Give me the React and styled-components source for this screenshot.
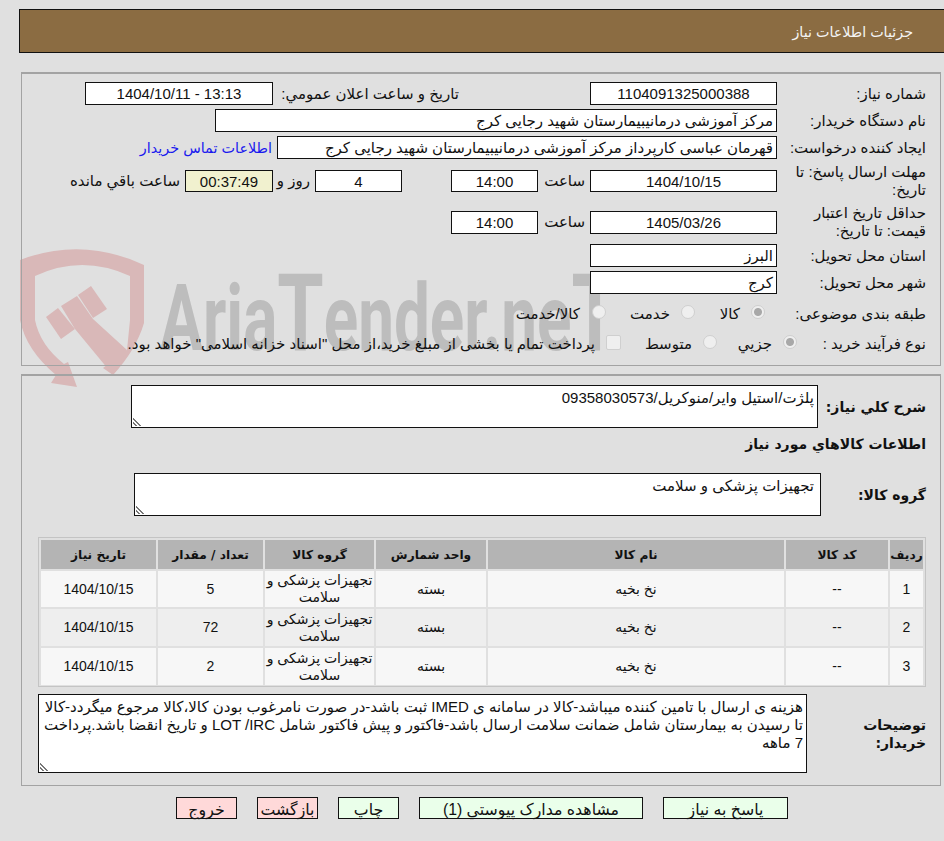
import { Fragment } from "react";
import styled, { createGlobalStyle } from "styled-components";

const GlobalStyle = createGlobalStyle`
  html, body {
    margin: 0;
    padding: 0;
    background: #e0e0e0;
  }
  body {
    font-family: "Liberation Sans", "DejaVu Sans", sans-serif;
    font-size: 15px;
    color: #111;
    overflow: hidden;
  }
`;

const Page = styled.div`
  position: relative;
  width: 944px;
  height: 841px;
  overflow: hidden;
  direction: rtl;
  padding-top: 9px;
  box-sizing: border-box;
`;

const TitleBar = styled.div`
  margin: 0 0 0 19px;
  height: 44px;
  box-sizing: border-box;
  background: #8b6c42;
  border: 1px solid #111;
  border-right: none;
  color: #f4f4f4;
  font-size: 14.3px;
  line-height: 44px;
  padding-right: 31px;
`;

const Panel = styled.section`
  margin: ${(p) => p.$top}px 3px 0 21px;
  height: ${(p) => p.$height}px;
  box-sizing: border-box;
  border: 1px solid #a3a3a3;
  border-top-width: 2px;
  padding-right: 14px;
  display: flex;
  flex-direction: column;
`;

const Row = styled.div`
  display: flex;
  align-items: center;
  height: ${(p) => p.$height}px;
  margin-top: ${(p) => p.$top || 0}px;
`;

const Label = styled.div`
  width: ${(p) => p.$width || 149}px;
  flex: none;
  line-height: 18px;
  white-space: ${(p) => (p.$nowrap ? "nowrap" : "normal")};
`;

const BoldLabel = styled(Label)`
  font-family: "DejaVu Sans", sans-serif;
  font-size: 14px;
  font-weight: 700;
`;

const Field = styled.div`
  width: ${(p) => p.$width}px;
  height: ${(p) => p.$height || 23}px;
  flex: none;
  box-sizing: border-box;
  border: 1px solid #111;
  background: ${(p) => p.$bg || "#fff"};
  text-align: ${(p) => p.$align || "center"};
  padding: 0 3px;
  line-height: 21px;
  white-space: nowrap;
  overflow: hidden;
  direction: ${(p) => p.$dir || "rtl"};
  margin-right: ${(p) => p.$gap || 0}px;
`;

const Inline = styled.span`
  flex: none;
  white-space: nowrap;
  width: ${(p) => (p.$width ? `${p.$width}px` : "auto")};
  margin-right: ${(p) => p.$gap || 0}px;
`;

const BuyerLink = styled.a`
  color: #1a1aee;
  font-size: 14.4px;
  text-decoration: none;
  flex: none;
  margin-right: 5px;
`;

const Radio = styled.span`
  width: 14px;
  height: 14px;
  flex: none;
  position: relative;
  top: -2px;
  box-sizing: border-box;
  border-radius: 50%;
  border: 1px solid #cfcfcf;
  background: ${(p) => (p.$on ? "radial-gradient(circle, #a8a8a8 0 3.5px, #efefef 4.5px)" : "#efefef")};
  margin-right: ${(p) => p.$gap || 0}px;
`;

const Check = styled.span`
  width: 15px;
  height: 15px;
  flex: none;
  position: relative;
  top: -2px;
  box-sizing: border-box;
  border: 1px solid #cfcfcf;
  border-radius: 2px;
  background: #efefef;
`;

const Note = styled.div`
  position: relative;
  flex: none;
  box-sizing: border-box;
  width: ${(p) => p.$width}px;
  height: ${(p) => p.$height}px;
  border: 1px solid #111;
  background: #fff;
  padding: 3px ${(p) => p.$pad || 3}px 0;
  line-height: 18px;
  &::after {
    content: "";
    position: absolute;
    left: 1px;
    bottom: 1px;
    width: 9px;
    height: 9px;
    background: repeating-linear-gradient(45deg, transparent 0 1.5px, #777 1.5px 3px);
    clip-path: polygon(0 0, 100% 100%, 0 100%);
  }
`;

const BoldHeading = styled.div`
  font-family: "DejaVu Sans", sans-serif;
  font-size: 14px;
  font-weight: 700;
  height: 18px;
  line-height: 18px;
  margin-top: 7px;
`;

const GoodsTable = styled.div`
  width: 888px;
  height: 150px;
  margin-top: 21px;
  box-sizing: border-box;
  border: 1px solid #c4c4c4;
  padding: 2px;
  display: grid;
  grid-template-columns: 33px 102px 296px 110px 109px 105px 115px;
  grid-template-rows: 29px 36px 37px 37px;
  gap: 2px;
`;

const HeadCell = styled.div`
  background: #b4b4b4;
  font-family: "DejaVu Sans", sans-serif;
  font-weight: 700;
  font-size: 12.2px;
  white-space: nowrap;
  display: flex;
  align-items: center;
  justify-content: center;
`;

const Cell = styled.div`
  background: ${(p) => (p.$even ? "#eeeeee" : "#f7f7f7")};
  display: flex;
  align-items: center;
  justify-content: center;
  text-align: center;
  line-height: 17px;
  font-size: 14px;
`;

const Buttons = styled.div`
  display: flex;
  margin: 11px 156px 0 0;
  gap: 20px;
`;

const Button = styled.button`
  width: ${(p) => p.$width}px;
  height: 22px;
  box-sizing: border-box;
  padding: 2px 0 0;
  border: 1px solid #111;
  background: ${(p) => (p.$danger ? "#ffd9d9" : "#eaffea")};
  font: inherit;
  font-size: 15.8px;
  color: #111;
  direction: rtl;
`;

const Watermark = styled.div`
  position: absolute;
  left: 15px;
  top: 240px;
  width: 800px;
  height: 160px;
  z-index: 1;
  pointer-events: none;
  direction: ltr;
`;

const Content = styled.div`
  position: relative;
  z-index: 2;
`;

const rows = [
  { id: 1, qty: 5 },
  { id: 2, qty: 72 },
  { id: 3, qty: 2 },
];

const heads = ["ردیف", "کد کالا", "نام کالا", "واحد شمارش", "گروه کالا", "تعداد / مقدار", "تاريخ نياز"];

function WatermarkLogo() {
  return (
    <Watermark>
      <svg width="800" height="160" viewBox="15 240 800 160">
        <g fill="#d9b8b8">
          {/* shield, open at the bottom, ending in an arrow on the left */}
          <path d="M20 260 Q82 236 144 265 V323 Q136 350 113 375 L103 368 L127 350 L130 320 V276 Q82 254 35 276 V320 Q40 345 64 364 L68 362 L77 387 L51 383 L56 375 Q26 350 20 320 Z" />
          <path d="M46 317 L58 308 L75 329 L61 339 Z" />
          <path d="M61 306 L77 296 L93 319 L127 350 L113 375 L75 329 Z" />
          <path d="M78 295 L91 286 L107 309 L93 318 Z" />
        </g>
        <text
          x="160"
          y="350"
          fontFamily="Roboto, sans-serif"
          fontWeight="700"
          fontSize="92"
          fill="#bdbdbd"
          textLength="458"
          lengthAdjust="spacingAndGlyphs"
        >
          Aria<tspan fontSize="108">T</tspan>ender.ne<tspan fontSize="108">T</tspan>
        </text>
      </svg>
    </Watermark>
  );
}

export default function App() {
  return (
    <Page>
      <GlobalStyle />
      <WatermarkLogo />
      <Content>
        <TitleBar>جزئيات اطلاعات نياز</TitleBar>

        <Panel $top={19} $height={294}>
          <Row $height={23} $top={8}>
            <Label>شماره نياز:</Label>
            <Field $width={187}>1104091325000388</Field>
            <Inline $gap={131} $width={181}>تاريخ و ساعت اعلان عمومي:</Inline>
            <Field $width={188} $gap={5} $dir="ltr">1404/10/11 - 13:13</Field>
          </Row>
          <Row $height={23} $top={4}>
            <Label>نام دستگاه خريدار:</Label>
            <Field $width={562} $align="right">مرکز آموزشی درمانیبیمارستان شهید رجایی کرج</Field>
          </Row>
          <Row $height={23} $top={4}>
            <Label $nowrap>ايجاد کننده درخواست:</Label>
            <Field $width={500} $align="right">قهرمان عباسی کارپرداز مرکز آموزشی درمانیبیمارستان شهید رجایی کرج</Field>
            <BuyerLink href="#">اطلاعات تماس خريدار</BuyerLink>
          </Row>
          <Row $height={36} $top={4}>
            <Label>مهلت ارسال پاسخ: تا تاريخ:</Label>
            <Field $width={187} $height={22}>1404/10/15</Field>
            <Inline $gap={5} $width={47}>ساعت</Inline>
            <Field $width={87} $height={22}>14:00</Field>
            <Field $width={87} $height={22} $gap={49}>4</Field>
            <Inline $gap={5} $width={37}>روز و</Inline>
            <Field $width={88} $height={22} $bg="#f1f1cf">00:37:49</Field>
            <Inline $gap={5}>ساعت باقي مانده</Inline>
          </Row>
          <Row $height={36} $top={5}>
            <Label>حداقل تاريخ اعتبار قيمت: تا تاريخ:</Label>
            <Field $width={187}>1405/03/26</Field>
            <Inline $gap={5} $width={47}>ساعت</Inline>
            <Field $width={87}>14:00</Field>
          </Row>
          <Row $height={23} $top={4}>
            <Label>استان محل تحويل:</Label>
            <Field $width={187} $align="right">البرز</Field>
          </Row>
          <Row $height={23} $top={4}>
            <Label>شهر محل تحويل:</Label>
            <Field $width={187} $align="right">کرج</Field>
          </Row>
          <Row $height={18} $top={11}>
            <Label>طبقه بندی موضوعی:</Label>
            <Radio $on $gap={12} />
            <Inline $gap={11} $width={45}>کالا</Inline>
            <Radio />
            <Inline $gap={11} $width={64}>خدمت</Inline>
            <Radio />
            <Inline $gap={12}>کالا/خدمت</Inline>
          </Row>
          <Row $height={18} $top={12}>
            <Label $width={129} $nowrap>نوع فرآيند خريد :</Label>
            <Radio $on />
            <Inline $gap={11} $width={55}>جزيي</Inline>
            <Radio />
            <Inline $gap={11} $width={71}>متوسط</Inline>
            <Check />
            <Inline $gap={11}>پرداخت تمام یا بخشی از مبلغ خرید،از محل "اسناد خزانه اسلامی" خواهد بود.</Inline>
          </Row>
        </Panel>

        <Panel $top={8} $height={412}>
          <Row $height={43} $top={9}>
            <BoldLabel $width={108}>شرح كلي نياز:</BoldLabel>
            <Note $width={687} $height={43}>پلژت/استیل وایر/منوکریل/09358030573</Note>
          </Row>
          <BoldHeading>اطلاعات كالاهاي مورد نياز</BoldHeading>
          <Row $height={43} $top={20}>
            <BoldLabel $width={105}>گروه كالا:</BoldLabel>
            <Note $width={687} $height={43} $pad={6}>تجهیزات پزشکی و سلامت</Note>
          </Row>
          <GoodsTable>
            {heads.map((h) => (
              <HeadCell key={h}>{h}</HeadCell>
            ))}
            {rows.map((r) => (
              <Fragment key={r.id}>
                <Cell $even={r.id === 2}>{r.id}</Cell>
                <Cell $even={r.id === 2}>--</Cell>
                <Cell $even={r.id === 2}>نخ بخیه</Cell>
                <Cell $even={r.id === 2}>بسته</Cell>
                <Cell $even={r.id === 2}>تجهیزات پزشکی و سلامت</Cell>
                <Cell $even={r.id === 2}>{r.qty}</Cell>
                <Cell $even={r.id === 2}>1404/10/15</Cell>
              </Fragment>
            ))}
          </GoodsTable>
          <Row $height={79} $top={7}>
            <BoldLabel $width={119}>توضيحات<br />خريدار:</BoldLabel>
            <Note $width={769} $height={79}>هزینه ی ارسال با تامین کننده میباشد-کالا در سامانه ی IMED ثبت باشد-در صورت نامرغوب بودن کالا،کالا مرجوع میگردد-کالا تا رسیدن به بیمارستان شامل ضمانت سلامت ارسال باشد-فاکتور و پیش فاکتور شامل LOT /IRC و تاریخ انقضا باشد.پرداخت 7 ماهه</Note>
          </Row>
        </Panel>

        <Buttons>
          <Button $width={125}>پاسخ به نياز</Button>
          <Button $width={224}>مشاهده مدارک پيوستي (1)</Button>
          <Button $width={61}>چاپ</Button>
          <Button $width={61} $danger>بازگشت</Button>
          <Button $width={61} $danger>خروج</Button>
        </Buttons>
      </Content>
    </Page>
  );
}
